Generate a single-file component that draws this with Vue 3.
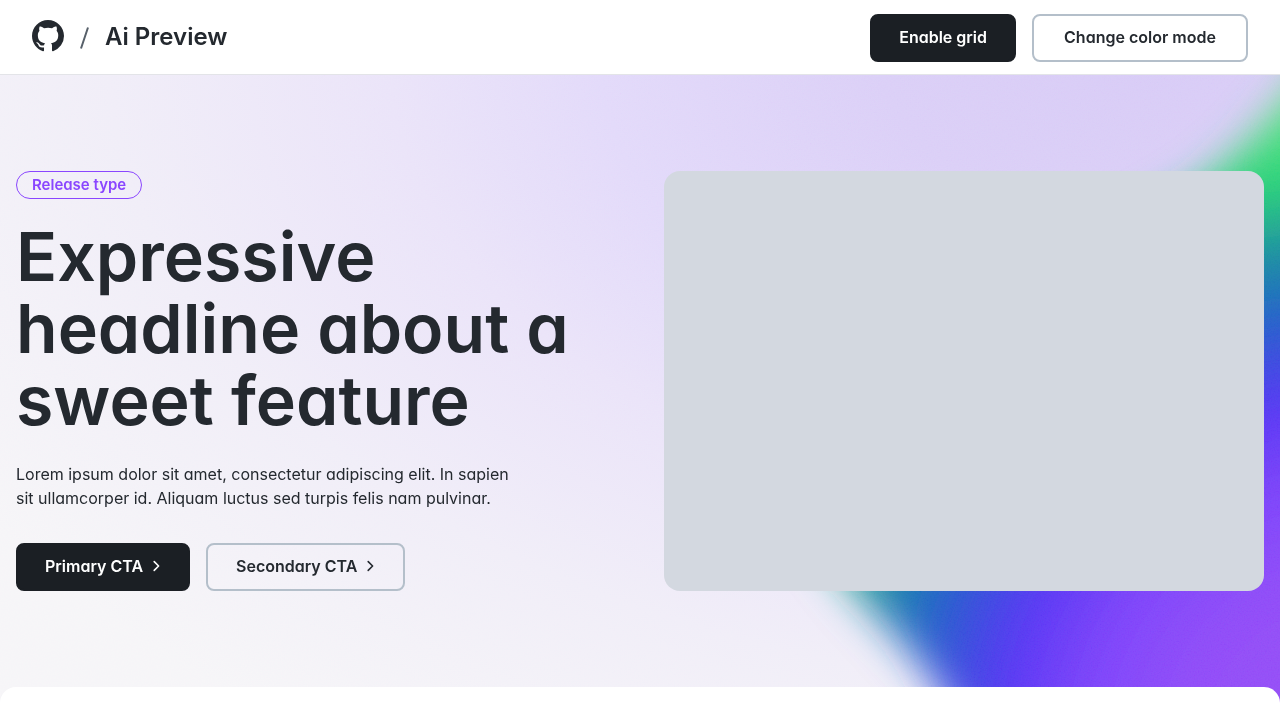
<script setup>
const headline = ['Expressive', 'headline about a', 'sweet feature']
const actions = [
  { label: 'Primary CTA', kind: 'primary' },
  { label: 'Secondary CTA', kind: 'secondary' },
]
</script>

<template>
  <div class="page">
    <header class="topbar">
      <div class="brand">
        <a class="logo" href="#" aria-label="GitHub home">
          <svg width="32" height="32" viewBox="0 0 16 16" fill="currentColor" aria-hidden="true">
            <path d="M8 0C3.58 0 0 3.58 0 8c0 3.54 2.29 6.53 5.47 7.59.4.07.55-.17.55-.38 0-.19-.01-.82-.01-1.49-2.01.37-2.53-.49-2.69-.94-.09-.23-.48-.94-.82-1.13-.28-.15-.68-.52-.01-.53.63-.01 1.08.58 1.23.82.72 1.21 1.87.87 2.33.66.07-.52.28-.87.51-1.07-1.78-.2-3.64-.89-3.64-3.95 0-.87.31-1.59.82-2.15-.08-.2-.36-1.02.08-2.12 0 0 .67-.21 2.2.82.64-.18 1.32-.27 2-.27s1.36.09 2 .27c1.53-1.04 2.2-.82 2.2-.82.44 1.1.16 1.92.08 2.12.51.56.82 1.27.82 2.15 0 3.07-1.87 3.75-3.65 3.95.29.25.54.73.54 1.48 0 1.07-.01 1.93-.01 2.2 0 .21.15.46.55.38A8.01 8.01 0 0 0 16 8c0-4.42-3.58-8-8-8Z" />
          </svg>
        </a>
        <svg class="slash" width="9" height="22" viewBox="0 0 9 22" aria-hidden="true">
          <path d="M8 0.5 1 21.5" fill="none" stroke="currentColor" stroke-width="2" />
        </svg>
        <span class="title">Ai Preview</span>
      </div>
      <div class="actions">
        <button type="button" class="btn primary">Enable grid</button>
        <button type="button" class="btn secondary wide">Change color mode</button>
      </div>
    </header>

    <main>
      <section class="hero">
        <svg class="backdrop" viewBox="0 0 1280 645" preserveAspectRatio="none" aria-hidden="true">
          <defs>
            <radialGradient
              id="haze"
              gradientUnits="userSpaceOnUse"
              cx="0"
              cy="0"
              r="1"
              gradientTransform="translate(1160 -20) scale(1400 850)"
            >
              <stop offset="0" stop-color="#d7caf6" />
              <stop offset="0.2" stop-color="#dacef7" />
              <stop offset="0.4" stop-color="#e2d9fa" />
              <stop offset="0.55" stop-color="#eae3f9" />
              <stop offset="0.75" stop-color="#f0edf8" />
              <stop offset="1" stop-color="#f6f5f8" />
            </radialGradient>
            <radialGradient id="spectrum" gradientUnits="userSpaceOnUse" cx="1350" cy="675" r="658">
              <stop offset="0" stop-color="#964ff5" />
              <stop offset="0.25" stop-color="#8f4af8" />
              <stop offset="0.4" stop-color="#7c42fa" />
              <stop offset="0.52" stop-color="#5935f5" />
              <stop offset="0.58" stop-color="#4040e6" />
              <stop offset="0.67" stop-color="#2060c6" />
              <stop offset="0.76" stop-color="#1c8a9e" />
              <stop offset="0.87" stop-color="#28d474" />
              <stop offset="1" stop-color="#5be47c" />
            </radialGradient>
            <filter id="soften" filterUnits="userSpaceOnUse" x="500" y="-150" width="1100" height="1100">
              <feGaussianBlur stdDeviation="20" />
            </filter>
            <filter id="grain" x="0" y="0" width="100%" height="100%">
              <feTurbulence type="fractalNoise" baseFrequency="0.7" numOctaves="2" seed="4" />
              <feColorMatrix
                values="2 0 0 0 -0.2
                        0 2 0 0 -0.2
                        0 0 2 0 -0.1
                        0 0 0 0 1"
              />
            </filter>
          </defs>
          <rect width="1280" height="645" fill="url(#haze)" />
          <path
            d="M1500 -80 L1330 -30 C1275 35 1250 75 1195 112 C1040 205 800 300 800 400 C800 460 835 490 866 530 C915 580 948 620 972 680 L1000 820 L1500 820 Z"
            fill="url(#spectrum)"
            filter="url(#soften)"
          />
          <rect class="grain" width="1280" height="645" filter="url(#grain)" />
        </svg>

        <div class="inner">
          <div class="copy">
            <span class="label">Release type</span>
            <h1><template v-for="(line, i) in headline" :key="line"><br v-if="i" />{{ line }}</template></h1>
            <p>
              Lorem ipsum dolor sit amet, consectetur adipiscing elit. In sapien sit ullamcorper id.
              Aliquam luctus sed turpis felis nam pulvinar.
            </p>
            <div class="actions">
              <a v-for="a in actions" :key="a.label" href="#" class="btn" :class="a.kind">
                {{ a.label }}
                <svg width="10" height="16" viewBox="3 0 10 16" aria-hidden="true">
                  <path d="M6.2 3.6 10.6 8l-4.4 4.4" fill="none" stroke="currentColor" stroke-width="1.6" stroke-linecap="round" stroke-linejoin="round" />
                </svg>
              </a>
            </div>
          </div>
          <div class="media"></div>
        </div>
      </section>
      <section class="sheet"></section>
    </main>
  </div>
</template>

<style>
body {
  background: #ffffff;
}
</style>

<style scoped>
.page {
  height: 100vh;
  overflow: hidden;
  font-family: Inter, "Liberation Sans", sans-serif;
  font-feature-settings: "cv11" 1;
  color: #24292f;
}

.topbar {
  display: flex;
  justify-content: space-between;
  align-items: flex-start;
  padding: 14px 32px 12px;
  background: #ffffff;
  border-bottom: 1px solid #e3e4e8;
}

.brand {
  display: flex;
  align-items: center;
  gap: 16px;
  height: 44px;
}

.logo {
  display: flex;
  color: #24292f;
}

.slash {
  margin-top: 4px;
  color: #57606a;
}

.title {
  padding-top: 2px;
  font-size: 24px;
  line-height: 32px;
  font-weight: 600;
}

.actions {
  display: flex;
  gap: 16px;
}

.btn {
  box-sizing: border-box;
  display: inline-flex;
  align-items: center;
  justify-content: center;
  gap: 8px;
  height: 48px;
  padding: 0 27px 2px;
  border: 2px solid transparent;
  border-radius: 8px;
  font-family: inherit;
  font-feature-settings: inherit;
  font-size: 16px;
  line-height: 24px;
  font-weight: 600;
  text-decoration: none;
  white-space: nowrap;
  cursor: pointer;
}

.primary {
  background: #1b1f24;
  border-color: #1b1f24;
  color: #ffffff;
}

.secondary {
  padding: 0 28px 2px;
  background: transparent;
  border-color: #b4bfca;
  color: #24292f;
}

.wide {
  min-width: 216px;
}

.hero {
  position: relative;
  padding: 96px 16px 128px;
}

.backdrop {
  position: absolute;
  inset: 0;
  width: 100%;
  height: 100%;
}

.grain {
  opacity: 0.12;
  mix-blend-mode: soft-light;
}

.inner {
  position: relative;
  display: grid;
  grid-template-columns: 1fr 1fr;
  gap: 48px;
}

.label {
  display: inline-block;
  box-sizing: border-box;
  height: 28px;
  padding: 0 15px;
  border: 1px solid #8a46ff;
  border-radius: 14px;
  color: #8a46ff;
  font-size: 15px;
  line-height: 26px;
  font-weight: 600;
}

.copy {
  display: flex;
  flex-direction: column;
  align-items: flex-start;
}

h1 {
  margin: 21px 0 26px;
  font-size: 68px;
  line-height: 72px;
  font-weight: 600;
  white-space: nowrap;
}

p {
  max-width: 512px;
  margin: 0 0 33px;
  font-size: 16px;
  line-height: 24px;
}

.media {
  min-height: 420px;
  border-radius: 16px;
  background: #d3d8e0;
}

.sheet {
  position: relative;
  min-height: 320px;
  margin-top: -32px;
  border-radius: 16px 16px 0 0;
  background: #ffffff;
}
</style>
